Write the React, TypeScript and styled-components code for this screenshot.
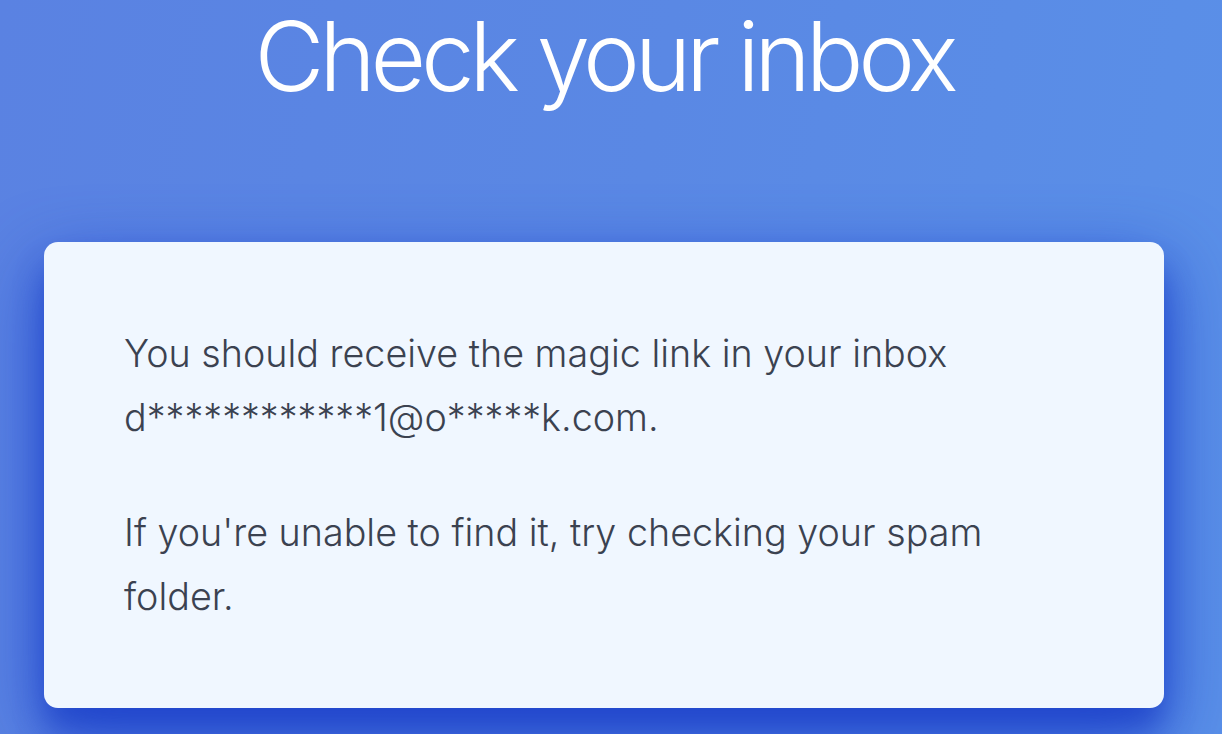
import React from "react";
import styled, { createGlobalStyle } from "styled-components";

const Global = createGlobalStyle`
  html, body {
    margin: 0;
    padding: 0;
    height: 100%;
  }
  body {
    font-family: Inter, "Noto Sans", sans-serif;
    background: linear-gradient(100deg, #5a82e2 0%, #5a88e4 50%, #5a90e8 100%);
    overflow: hidden;
  }
`;

const Page = styled.main`
  min-height: 734px;
  display: flex;
  flex-direction: column;
  align-items: center;
  padding: 0 58px 0 44px;
  box-sizing: border-box;
`;

const Title = styled.h1`
  margin: 0 0 130px;
  font-family: Inter, sans-serif;
  font-weight: 260;
  font-size: 96px;
  line-height: 112px;
  color: #ffffff;
  letter-spacing: -5.2px;
`;

const Card = styled.section`
  width: 1120px;
  box-sizing: border-box;
  background: #f0f7ff;
  border-radius: 14px;
  padding: 79px 80px 80px;
  box-shadow: 0 26px 70px rgba(32, 68, 205, 0.95),
    0 24px 30px -4px rgba(36, 74, 200, 0.85);
`;

const Text = styled.p<{ $last?: boolean }>`
  margin: 0 0 ${(p) => (p.$last ? "0" : "51px")};
  font-family: Inter, sans-serif;
  font-weight: 300;
  font-size: 37.7px;
  line-height: 64px;
  color: #3b4250;
  max-width: 900px;
`;

export default function App() {
  return (
    <>
      <Global />
      <Page>
        <Title>Check your inbox</Title>
        <Card>
          <Text>
            You should receive the magic link in your inbox
            <br />
            d************1@o*****k.com.
          </Text>
          <Text $last>
            If you're unable to find it, try checking your spam folder.
          </Text>
        </Card>
      </Page>
    </>
  );
}
